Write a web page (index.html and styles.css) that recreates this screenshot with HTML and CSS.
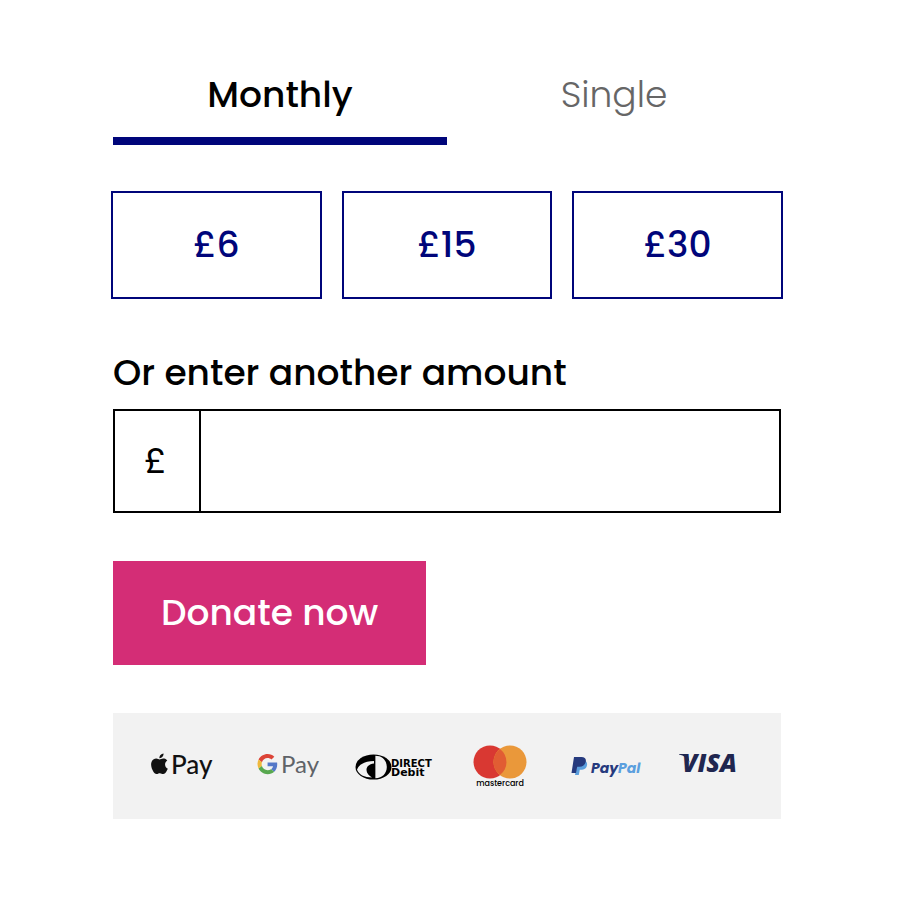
FILE: index.html
```html
<!DOCTYPE html>
<html lang="en">
<head>
<meta charset="utf-8">
<meta name="viewport" content="width=device-width, initial-scale=1">
<title>Donate</title>
<link rel="stylesheet" href="styles.css">
</head>
<body>
<form class="donate">
  <div class="tabs" role="tablist">
    <button class="tab tab-active" type="button" role="tab" aria-selected="true">Monthly</button>
    <button class="tab" type="button" role="tab" aria-selected="false">Single</button>
  </div>
  <div class="amounts">
    <button class="amount" type="button">£6</button>
    <button class="amount" type="button">£15</button>
    <button class="amount" type="button">£30</button>
  </div>
  <label class="label" for="other">Or enter another amount</label>
  <div class="field">
    <span class="prefix">£</span>
    <input class="input" id="other" type="text" inputmode="decimal">
  </div>
  <button class="submit" type="submit">Donate now</button>
  <div class="payments">
    <svg class="logo" viewBox="0 0 106 106" role="img" aria-label="Apple Pay">
      <path fill="#111" transform="translate(20.2 40.5) scale(.855)" d="M12.152 6.896c-.948 0-2.415-1.078-3.96-1.04-2.04.027-3.91 1.183-4.961 3.014-2.117 3.675-.546 9.103 1.519 12.09 1.013 1.454 2.208 3.09 3.792 3.039 1.52-.065 2.09-.987 3.935-.987 1.831 0 2.35.987 3.96.948 1.637-.026 2.676-1.48 3.676-2.948 1.156-1.688 1.636-3.325 1.662-3.415-.039-.013-3.182-1.221-3.22-4.857-.026-3.04 2.48-4.494 2.597-4.559-1.429-2.09-3.623-2.324-4.39-2.376-2-.156-3.675 1.09-4.61 1.09zM15.53 3.83c.843-1.012 1.4-2.427 1.245-3.83-1.207.052-2.662.805-3.532 1.818-.78.896-1.454 2.338-1.273 3.714 1.338.104 2.715-.688 3.559-1.701"/>
      <text class="apple-text" x="42" y="61">Pay</text>
    </svg>
    <svg class="logo" viewBox="0 0 106 106" role="img" aria-label="Google Pay">
      <g transform="translate(22.5 41) scale(.42)">
        <path fill="#dc4437" d="M24 9.5c3.54 0 6.71 1.22 9.21 3.6l6.85-6.85C35.9 2.38 30.47 0 24 0 14.62 0 6.51 5.38 2.56 13.22l7.98 6.19C12.43 13.72 17.74 9.5 24 9.5z"/>
        <path fill="#5478c8" d="M46.98 24.55c0-1.57-.15-3.09-.38-4.55H24v9.02h12.94c-.58 2.96-2.26 5.48-4.78 7.18l7.73 6c4.51-4.18 7.09-10.36 7.09-17.65z"/>
        <path fill="#efb93c" d="M10.53 28.59c-.48-1.45-.76-2.99-.76-4.59s.27-3.14.76-4.59l-7.98-6.19C.92 16.46 0 20.12 0 24c0 3.88.92 7.54 2.56 10.78l7.97-6.19z"/>
        <path fill="#58a84f" d="M24 48c6.48 0 11.93-2.13 15.89-5.81l-7.73-6c-2.15 1.45-4.92 2.3-8.16 2.3-6.26 0-11.57-4.22-13.47-9.91l-7.98 6.19C6.51 42.62 14.62 48 24 48z"/>
      </g>
      <text class="google-text" x="46" y="60">Pay</text>
    </svg>
    <svg class="logo" viewBox="0 0 106 106" role="img" aria-label="Direct Debit">
      <ellipse cx="32.5" cy="54" rx="18" ry="12.6"/>
      <path fill="#f2f2f2" d="M34.4 42.800c7 0 11.400 5 11.400 11.200s-4.400 11.200-11.400 11.200z"/>
      <path fill="#f2f2f2" d="M16 56.500c2-5.500 8.500-8.300 17-8.500v2.500c-5 .5-7.500 3.200-7.500 6.500s2.500 5.500 5.500 7.500c-7.500 0-13.500-3-15-8z"/>
      <text class="direct-text" x="50" y="54">DIRECT</text>
      <text class="debit-text" x="50" y="63">Debit</text>
    </svg>
    <svg class="logo" viewBox="0 0 106 106" role="img" aria-label="Mastercard">
      <circle cx="43" cy="49" r="16.500" fill="#d93832"/>
      <circle cx="63" cy="49" r="16.500" fill="#ea983a"/>
      <path fill="#e15d33" d="M53 35.900a16.500 16.500 0 0 1 0 26.200a16.500 16.500 0 0 1 0-26.200z"/>
      <text class="master-text" x="53" y="73">mastercard</text>
    </svg>
    <svg class="logo" viewBox="0 0 106 106" role="img" aria-label="PayPal">
      <path fill="#5b9fde" d="M25 47.500h5c3.500 0 4.500 2.300 4 4.800-.7 3.400-3 4.500-6 4.500h-1.200l-1 5.200h-3.800z"/>
      <path fill="#263a7e" d="M21 44h7.500c3.200 0 4.800 1.800 4.300 4.500-.6 3.500-3 5.300-6.300 5.300h-2.300l-1.200 6.200h-4.500z"/>
      <text class="paypal-text" x="38" y="60">Pay<tspan fill="#5b9fde">Pal</tspan></text>
    </svg>
    <svg class="logo" viewBox="0 0 106 106" role="img" aria-label="Visa">
      <path fill="#20264f" d="M20 41h7c1.200 0 1.800.6 2 1.600l1.500 7C28.500 45 25 42.500 20 41.500z"/>
      <text class="visa-text" x="23" y="59">VISA</text>
    </svg>
  </div>
</form>
</body>
</html>
```
FILE: styles.css
```css
* { box-sizing: border-box; }
body {
  margin: 0;
  background: #fff;
  color: #000;
  font-family: Poppins, Inter, sans-serif;
  font-size: 36px;
  line-height: 56px;
}
button, input {
  margin: 0;
  padding: 0;
  border: 0;
  border-radius: 0;
  background: none;
  color: inherit;
  font: inherit;
}
button { cursor: pointer; }
.donate { padding: 65px 119px 80px 113px; }
.tabs { display: grid; grid-template-columns: 1fr 1fr; }
.tab {
  padding: 2px 0 14px;
  border-bottom: 8px solid transparent;
  color: #666;
  font-weight: 300;
}
.tab-active { border-color: #00057a; color: #000; font-weight: 500; }
.amounts {
  display: grid;
  grid-template-columns: repeat(3, 1fr);
  gap: 20px;
  margin: 46px -2px 0;
}
.amount {
  height: 108px;
  border: 2px solid #00057a;
  color: #00057a;
  font-weight: 500;
}
.label { display: block; margin: 46px 0 8px; font-weight: 500; }
.field { display: flex; height: 104px; border: 2px solid #000; }
.prefix {
  display: flex;
  align-items: center;
  width: 86px;
  padding-left: 29px;
  border-right: 2px solid #000;
}
.input { flex: 1; min-width: 0; padding: 0 24px; }
.submit {
  display: block;
  height: 104px;
  margin: 48px 0;
  padding: 0 48px;
  background: #d42d76;
  color: #fff;
  font-weight: 500;
}
.payments {
  display: grid;
  grid-template-columns: repeat(6, 1fr);
  padding: 0 16px;
  background: #f2f2f2;
}
.logo { display: block; width: 100%; }
.apple-text { font: 500 26px Lato, sans-serif; fill: #111; }
.google-text { font: 400 24px Lato, sans-serif; fill: #5f6368; }
.direct-text { font: 700 10px "DejaVu Sans", sans-serif; }
.debit-text { font: 700 11px "DejaVu Sans", sans-serif; }
.master-text { font: 500 8px Poppins, sans-serif; text-anchor: middle; }
.paypal-text { font: italic 700 14px Poppins, sans-serif; fill: #263a7e; }
.visa-text { font: italic 800 25px "Open Sans", sans-serif; fill: #20264f; }
```
